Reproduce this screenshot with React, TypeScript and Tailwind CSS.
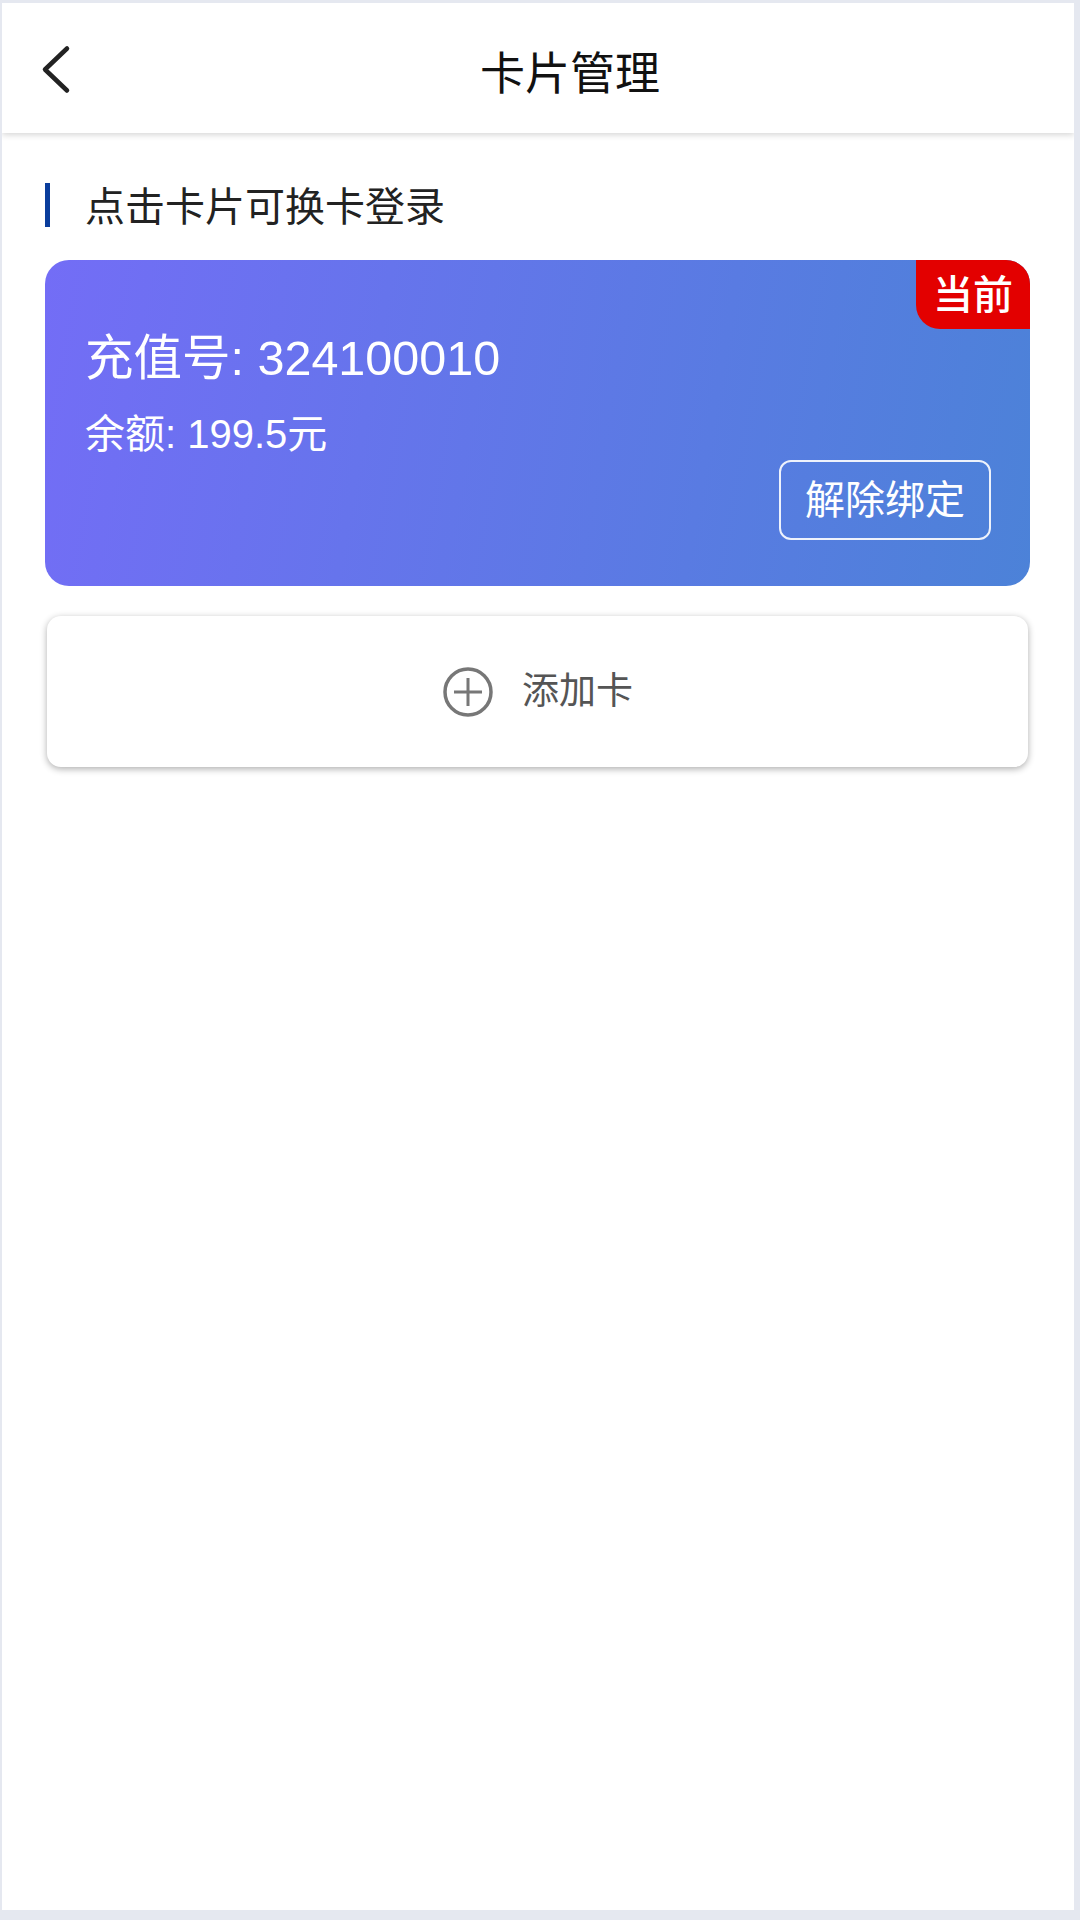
import React from "react";

const font = { fontFamily: '"Liberation Sans", "Noto Sans CJK SC", sans-serif' };

export default function App() {
  return (
    <div style={font} className="w-[1080px] h-[1920px] bg-[#e5e8f0] pl-[2px] pr-[6px] pt-[3px] pb-[10px] overflow-hidden">
      <div className="h-full bg-white flex flex-col overflow-hidden">
        <header className="h-[130px] shrink-0 flex items-center pl-[39px] shadow-[0_2px_6px_rgba(0,0,0,0.16)] relative">
          <svg className="mt-[3px]" width="32" height="50" viewBox="0 0 32 50" fill="none" stroke="#222" strokeWidth="4.5" strokeLinecap="round" strokeLinejoin="round">
            <path d="M26 3.5 L4 24.5 L26 45.5" />
          </svg>
          <h1 className="ml-[407px] mt-[14px] text-[45px] leading-[60px] font-normal text-[#111]">卡片管理</h1>
        </header>
        <main className="flex-1 pl-[43px] pr-[44px] pt-[50px]">
          <div className="h-[44px] flex items-center border-l-[5px] border-[#0a3d9c] pl-[35px] text-[40px] text-[#222] leading-[44px]">
            <span className="mt-[3px]">点击卡片可换卡登录</span>
          </div>
          <section className="mt-[33px] h-[326px] rounded-[24px] bg-[linear-gradient(100deg,#736df6_0%,#4c82d8_100%)] relative text-white pl-[40px] pt-[68px]">
            <div className="absolute right-0 top-0 w-[114px] h-[69px] bg-[#e30000] rounded-tr-[24px] rounded-bl-[24px] flex items-center justify-center text-[40px] font-medium">
              当前
            </div>
            <div className="text-[48.5px] leading-[60px]">充值号: 324100010</div>
            <div className="mt-[21px] text-[40px] leading-[50px]">余额: 199.5元</div>
            <div className="absolute right-[39px] bottom-[46px] w-[212px] h-[80px] rounded-[12px] border-[2.5px] border-white/90 flex items-center justify-center text-[40px]">
              解除绑定
            </div>
          </section>
          <button className="mt-[30px] mx-[2px] w-[981px] h-[151px] rounded-[14px] bg-white shadow-[0_2px_7px_rgba(0,0,0,0.32)] flex items-center justify-start pl-[396px] text-[37px] text-[#555]">
            <svg width="50" height="50" viewBox="0 0 50 50" fill="none" stroke="#777" strokeWidth="3.5">
              <circle cx="25" cy="25" r="23" />
              <path d="M25 11 V39 M11 25 H39" strokeWidth="3" />
            </svg>
            <span className="ml-[29px]">添加卡</span>
          </button>
        </main>
      </div>
    </div>
  );
}
